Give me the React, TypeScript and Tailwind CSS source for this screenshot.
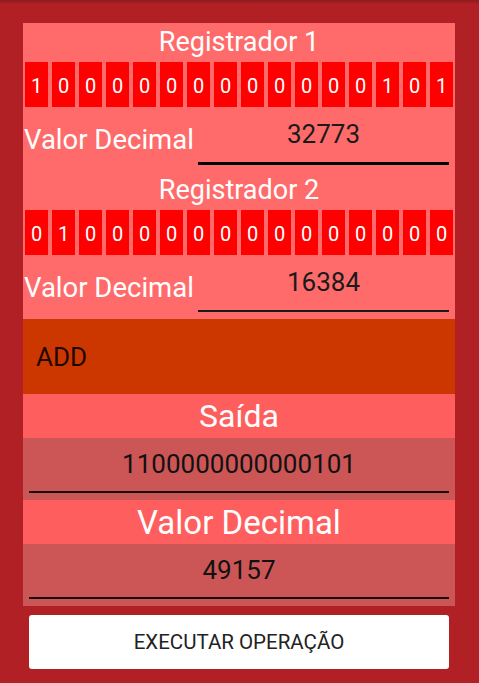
import React from "react";

const reg1 = "1000000000000101".split("");
const reg2 = "0100000000000000".split("");

function Bits({ bits }: { bits: string[] }) {
  return (
    <div className="flex h-[45px] gap-[4px] px-[2px]">
      {bits.map((b, i) => (
        <div
          key={i}
          className="flex h-[45px] w-[23px] items-center justify-center bg-[#FF0000] pt-[2px] text-[20px] leading-none text-white"
        >
          {b}
        </div>
      ))}
    </div>
  );
}

function ValueRow({ value, thick }: { value: string; thick: boolean }) {
  return (
    <div className="flex h-[64px] items-start">
      <div className="mt-[17px] flex h-[32px] w-[175px] items-center pl-[1px] text-[27.5px] leading-none text-white">
        Valor Decimal
      </div>
      <div
        className={
          thick
            ? "flex h-[58px] w-[251px] items-start justify-center border-b-[3px] border-black pt-[11px]"
            : "flex h-[57px] w-[251px] items-start justify-center border-b-[2px] border-[#1a1a1a] pt-[11px]"
        }
      >
        <div className="flex h-[32px] items-center text-[26px] leading-none text-[#1a1a1a]">{value}</div>
      </div>
    </div>
  );
}

function Output({ value }: { value: string }) {
  return (
    <div className="h-[62px] bg-[#CC5656] px-[6px]">
      <div className="flex h-[55px] items-start justify-center border-b-[2px] border-[#111] pt-[10px]">
        <div className="flex h-[32px] items-center text-[26px] leading-none text-[#111]">{value}</div>
      </div>
    </div>
  );
}

export default function App() {
  return (
    <div
      className="flex h-[683px] w-[479px] flex-col bg-[linear-gradient(to_bottom,#8c1a1d_0px,#B02024_4px)] pl-[23px] pr-[24px] pt-[23px]"
      style={{ fontFamily: "Roboto, 'Noto Sans', sans-serif" }}
    >
      <div className="flex w-[432px] flex-col bg-[#FF6B6B]">
        <div className="flex h-[39px] items-center justify-center text-[27px] leading-none text-white">
          Registrador 1
        </div>
        <Bits bits={reg1} />
        <ValueRow value="32773" thick={true} />
        <div className="flex h-[39px] items-center justify-center text-[27px] leading-none text-white">
          Registrador 2
        </div>
        <Bits bits={reg2} />
        <ValueRow value="16384" thick={false} />
        <div className="flex h-[75px] items-center bg-[#CC3700] pl-[13px] text-[26px] leading-none text-[#1f0800]">
          ADD
        </div>
        <div className="flex h-[44px] items-center justify-center bg-[#FF5E5E] text-[32px] leading-none text-white">
          Saída
        </div>
        <Output value="1100000000000101" />
        <div className="flex h-[44px] items-center justify-center bg-[#FF5E5E] text-[33px] leading-none text-white">
          Valor Decimal
        </div>
        <Output value="49157" />
      </div>
      <div className="mt-[9px] flex h-[54px] w-[420px] ml-[6px] items-center justify-center rounded-[3px] bg-white text-[20.5px] leading-none text-[#222]">
        EXECUTAR OPERAÇÃO
      </div>
    </div>
  );
}
